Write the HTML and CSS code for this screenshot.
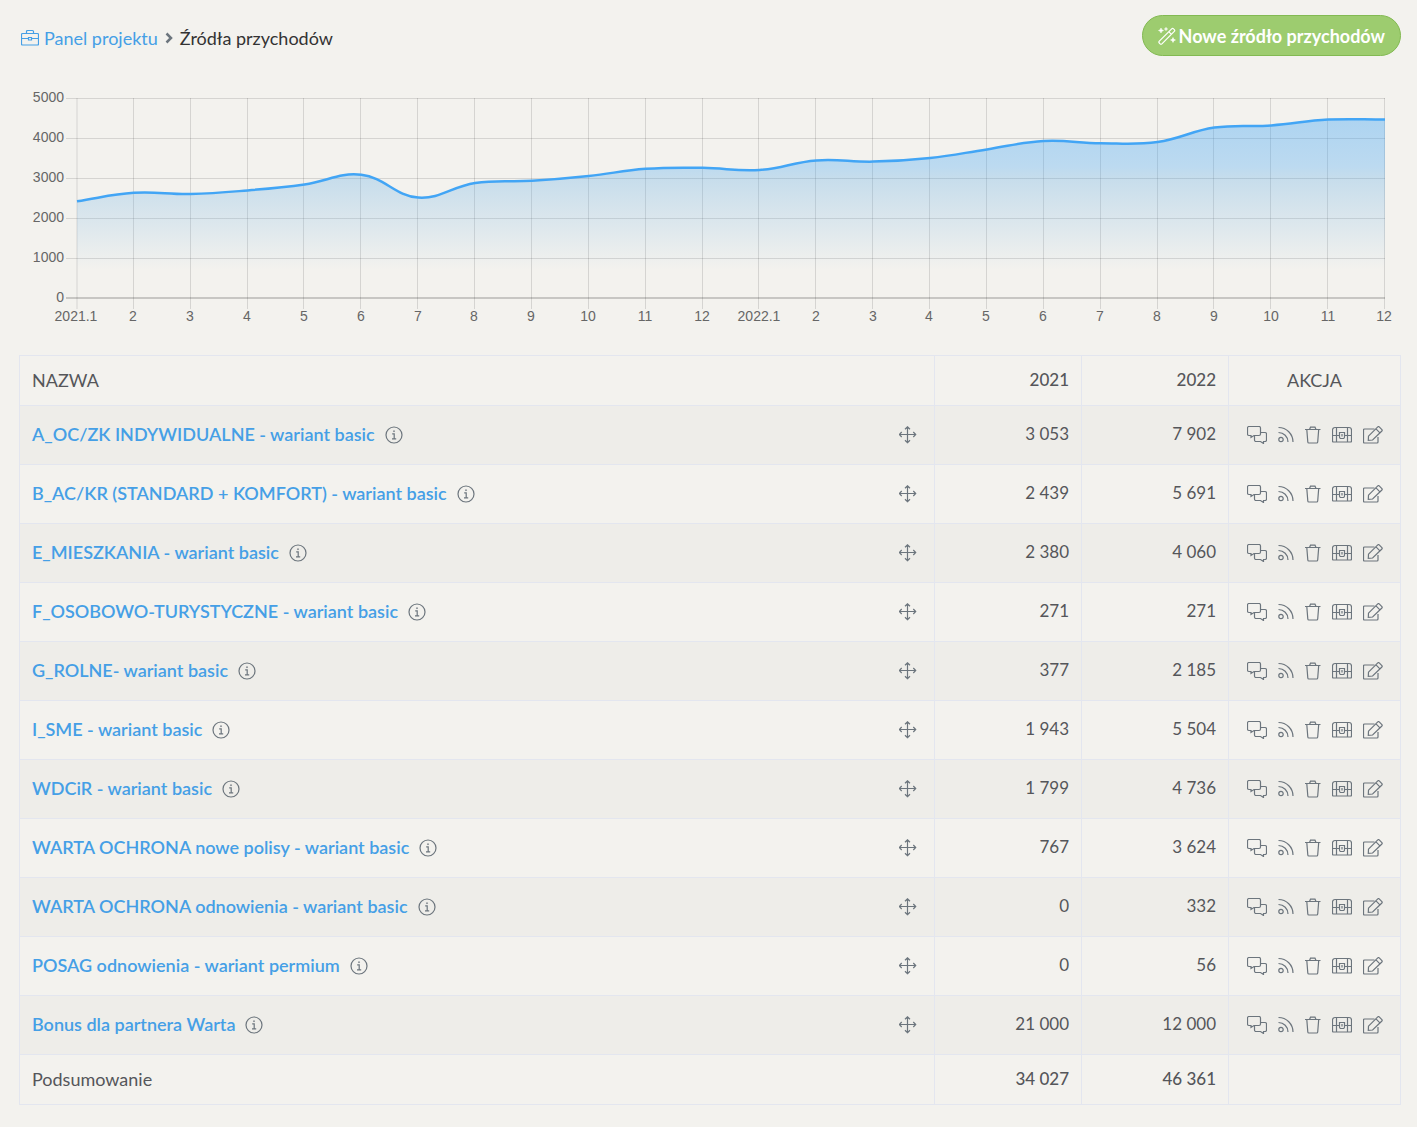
FILE: index.html
```html
<!DOCTYPE html>
<html lang="pl">
<head>
  <meta charset="utf-8">
  <meta name="viewport" content="width=device-width, initial-scale=1">
  <title>Źródła przychodów</title>
  <link rel="stylesheet" href="styles.css">
</head>
<body>
  <svg class="sprite" aria-hidden="true">
    <symbol id="i-comments" viewBox="0 0 20 18">
      <path d="M2 .5h10a1.5 1.5 0 0 1 1.500 1.500v6a1.500 1.500 0 0 1-1.500 1.500H7L4 11.500v-2H2A1.500 1.500 0 0 1 .5 8V2A1.500 1.500 0 0 1 2 .5z"/>
      <path d="M13.500 6.500H18A1.500 1.500 0 0 1 19.500 8v6a1.500 1.500 0 0 1-1.500 1.500h-1.500v2l-3-2H9A1.500 1.500 0 0 1 7.500 14V9.500"/>
    </symbol>
    <symbol id="i-rss" viewBox="0 0 16 18">
      <circle cx="3" cy="13.500" r="2.200"/>
      <path d="M.5 6.500a9.500 9.500 0 0 1 9.500 9.500M.5 1.500A14.500 14.500 0 0 1 15 16"/>
    </symbol>
    <symbol id="i-trash" viewBox="0 0 16 18">
      <path d="M0 3.500h15.500M4.500 3.500L5.500 1.200h4.500l1 2.300M1.800 3.500l1 12.500q.1 1 1 1h7.900q.9 0 1-1l1-12.500"/>
    </symbol>
    <symbol id="i-chest" viewBox="0 0 20 18">
      <path d="M3 1.500h14a2.500 2.500 0 0 1 2.500 2.500v11q0 1-1 1h-17q-1 0-1-1V4A2.500 2.500 0 0 1 3 1.500zM4.500 2v14M15.500 2v14M.5 9.500H7M13 9.500h6.500M7.500 6.500h5V11a1.500 1.500 0 0 1-1.500 1.500H9A1.500 1.500 0 0 1 7.500 11zM10 8v2.500"/>
    </symbol>
    <symbol id="i-edit" viewBox="0 0 20 18">
      <path d="M11.500 3H1.500q-1 0-1 1v12q0 1 1 1h12.500q1 0 1-1v-5"/>
      <path d="M5.500 10.200L14.800.9q.7-.7 1.400 0L18.900 3.600q.7.7 0 1.400L9.600 14l-4.300.4zM13 2.900l3.900 3.900"/>
    </symbol>
    <symbol id="i-move" viewBox="0 0 18 18">
      <path d="M8.500 .8v16.400M.3 8.500h16.400M6 3.200L8.500 .8l2.500 2.400M6 14.300L8.500 16.700l2.500-2.400M2.700 6L.3 8.500l2.400 2.500M14.300 6L16.700 8.500l-2.400 2.500"/>
    </symbol>
    <symbol id="i-info" viewBox="0 0 18 18">
      <circle cx="9" cy="9" r="8"/>
      <path d="M7.200 7.800h2v5M7 12.800h4.200"/>
      <circle class="dot" cx="9" cy="5.200" r=".6"/>
    </symbol>
    <symbol id="i-case" viewBox="0 0 18 18">
      <path d="M1.500 4.500h15q1 0 1 1v9.500q0 1-1 1h-15q-1 0-1-1V5.500q0-1 1-1zM5.500 4.500v-2q0-1 1-1h5q1 0 1 1v2M.5 9.500h7M10.500 9.500h7M7.500 8.500h3V11h-3z"/>
    </symbol>
    <symbol id="i-wand" viewBox="0 0 18 18">
      <path d="M1.300 14.200L13.700 1.800q.9-.9 1.800 0l.8.8q.9.9 0 1.800L3.900 16.800q-.9.900-1.800 0l-.8-.8q-.9-.9 0-1.800zM10.800 4.700l2.600 2.600"/>
      <path class="solid" d="M3 1l.8 1.700 1.700.8-1.700.8L3 6l-.8-1.700-1.700-.8 1.700-.8zM15 10.500l.8 1.700 1.700.8-1.700.8-.8 1.700-.8-1.700-1.700-.8 1.700-.8zM8 .3l.5 1.200 1.200.5-1.200.5L8 3.700l-.5-1.200L6.300 2l1.200-.5z"/>
    </symbol>
  </svg>

  <main class="page">
    <header class="topbar">
      <nav class="breadcrumb" aria-label="Nawigacja">
        <a class="crumb-link" href="#"><svg class="icon"><use href="#i-case"/></svg>Panel projektu</a>
        <svg class="chevron" viewBox="0 0 8 12"><path d="M1.500 1.500L6 6l-4.500 4.500"/></svg>
        <span>Źródła przychodów</span>
      </nav>
      <button class="new-button" type="button"><svg class="icon"><use href="#i-wand"/></svg>Nowe źródło przychodów</button>
    </header>

    <svg class="chart" id="chart" role="img" aria-label="Przychody"></svg>

    <table class="sources">
      <thead>
        <tr><th class="name">NAZWA</th><th class="num">2021</th><th class="num">2022</th><th class="actions">AKCJA</th></tr>
      </thead>
      <tbody id="rows"></tbody>
      <tfoot>
        <tr><td>Podsumowanie</td><td class="num">34 027</td><td class="num">46 361</td><td></td></tr>
      </tfoot>
    </table>
  </main>
  <script src="script.js"></script>
</body>
</html>
```
FILE: styles.css
```css
* {
  box-sizing: border-box;
}

body {
  margin: 0;
  background: #f3f2ee;
  color: #55565a;
  font: 18px/24px Lato, "Open Sans", sans-serif;
}

.sprite {
  display: none;
}

.page {
  padding: 15px 16px 22px 19px;
}

svg {
  fill: none;
  stroke: currentColor;
}

.icon {
  display: block;
  flex: none;
  width: 18px;
  height: 18px;
  stroke-width: 1.2;
}

.icon.wide {
  width: 20px;
}

.icon.narrow {
  width: 16px;
}

.dot,
.solid {
  fill: currentColor;
  stroke-width: 0.5;
}

.topbar {
  display: flex;
  justify-content: space-between;
  align-items: flex-start;
  margin-bottom: 24px;
}

.breadcrumb {
  display: flex;
  align-items: center;
  gap: 7px;
  padding: 11px 0 0 2px;
  color: #333;
}

.crumb-link {
  display: flex;
  align-items: center;
  gap: 5px;
  color: #459fe6;
  text-decoration: none;
}

.chevron {
  width: 8px;
  height: 12px;
  color: #6c757d;
  stroke-width: 2.5;
}

.new-button {
  display: flex;
  align-items: center;
  gap: 3px;
  height: 41px;
  padding: 0 15px;
  border: 1px solid #82b952;
  border-radius: 21px;
  background: #9dcc6f;
  color: #fff;
  font: inherit;
  font-weight: 700;
}

.chart {
  display: block;
  width: 100%;
  height: 255px;
  margin-bottom: 20px;
}

.chart text {
  fill: #666;
  stroke: none;
  font: 14px "Liberation Sans", Arial, sans-serif;
}

.grid {
  stroke: rgba(0, 0, 0, 0.12);
}

.grid.zero {
  stroke: rgba(0, 0, 0, 0.18);
  stroke-width: 2;
}

.area {
  fill: url(#fade);
  stroke: none;
}

.line {
  stroke: #42a5f5;
  stroke-width: 2.5;
}

.sources {
  width: 100%;
  border-collapse: collapse;
}

.sources th,
.sources td {
  height: 50px;
  padding: 0 12px;
  border: 1px solid #e3e6ef;
  font-weight: 400;
  text-align: left;
}

.sources tbody td {
  height: 59px;
}

.sources tbody tr:nth-child(odd) {
  background: #eeede9;
}

.sources th,
.sources tfoot td,
.sources .num {
  padding-bottom: 2px;
}

.sources .num {
  width: 147px;
  font-size: 17px;
  text-align: right;
}

.sources thead .num,
.sources tfoot .num {
  font-weight: 500;
}

.sources .actions {
  width: 172px;
  text-align: center;
}

.source {
  display: flex;
  align-items: center;
  gap: 10px;
}

.source a {
  padding-bottom: 2px;
  color: #459fe6;
  font-weight: 600;
  text-decoration: none;
}

.tool {
  padding: 0;
  border: 0;
  background: none;
  color: #6c757d;
}

.tool.move {
  margin: 0 5px 0 auto;
}

.tools {
  display: flex;
  justify-content: center;
  gap: 11px;
}
```
FILE: script.js
```js
const sources = [
  ["A_OC/ZK INDYWIDUALNE - wariant basic", "3 053", "7 902"],
  ["B_AC/KR (STANDARD + KOMFORT) - wariant basic", "2 439", "5 691"],
  ["E_MIESZKANIA - wariant basic", "2 380", "4 060"],
  ["F_OSOBOWO-TURYSTYCZNE - wariant basic", "271", "271"],
  ["G_ROLNE- wariant basic", "377", "2 185"],
  ["I_SME - wariant basic", "1 943", "5 504"],
  ["WDCiR - wariant basic", "1 799", "4 736"],
  ["WARTA OCHRONA nowe polisy - wariant basic", "767", "3 624"],
  ["WARTA OCHRONA odnowienia - wariant basic", "0", "332"],
  ["POSAG odnowienia - wariant permium", "0", "56"],
  ["Bonus dla partnera Warta", "21 000", "12 000"]
];

const tool = (icon, label, size = "", extra = "") =>
  `<button class="tool ${extra}" type="button" aria-label="${label}"><svg class="icon ${size}"><use href="#i-${icon}"/></svg></button>`;

document.getElementById("rows").innerHTML = sources.map(([name, first, second]) => `
  <tr>
    <td><div class="source"><a href="#">${name}</a>${tool("info", "Informacje")}${tool("move", "Przenieś", "", "move")}</div></td>
    <td class="num">${first}</td>
    <td class="num">${second}</td>
    <td><div class="tools">${tool("comments", "Komentarze", "wide")}${tool("rss", "Kanał", "narrow")}${tool("trash", "Usuń", "narrow")}${tool("chest", "Skarbiec", "wide")}${tool("edit", "Edytuj", "wide")}</div></td>
  </tr>`).join("");

const labels = ["2021.1", 2, 3, 4, 5, 6, 7, 8, 9, 10, 11, 12, "2022.1", 2, 3, 4, 5, 6, 7, 8, 9, 10, 11, 12];
const values = [2420, 2630, 2600, 2690, 2840, 3080, 2510, 2875, 2930, 3050, 3230, 3255, 3200, 3440, 3410, 3500, 3715, 3925, 3870, 3900, 4260, 4315, 4460, 4460];
const chart = document.getElementById("chart");

function drawChart() {
  const left = 58, right = chart.clientWidth - 16, top = 18, bottom = 218;
  const x = i => left + (right - left) * i / (values.length - 1);
  const y = v => bottom - (bottom - top) * v / 5000;
  const crisp = n => Math.floor(n) + 0.5;
  const points = values.map((v, i) => [x(i), y(v)]);

  // Smooth curve: control points follow the direction between each point's neighbours.
  const tension = 0.4;
  const handles = points.map((p, i) => {
    const a = points[i - 1] || p, b = points[i + 1] || p;
    const before = Math.hypot(p[0] - a[0], p[1] - a[1]);
    const after = Math.hypot(b[0] - p[0], b[1] - p[1]);
    const k = tension / (before + after);
    const dx = b[0] - a[0], dy = b[1] - a[1];
    return {
      from: [p[0] - k * before * dx, p[1] - k * before * dy],
      to: [p[0] + k * after * dx, p[1] + k * after * dy]
    };
  });
  const curve = "M" + points[0] + points.slice(1).map((p, i) => `C${handles[i].to} ${handles[i + 1].from} ${p}`).join("");

  let svg = `<defs><linearGradient id="fade" gradientUnits="userSpaceOnUse" x1="0" x2="0" y1="18" y2="190">
    <stop offset="0" stop-color="#42a5f5" stop-opacity=".43"/>
    <stop offset=".4" stop-color="#42a5f5" stop-opacity=".31"/>
    <stop offset=".47" stop-color="#59a9e6" stop-opacity=".29"/>
    <stop offset=".72" stop-color="#7db9e8" stop-opacity=".2"/>
    <stop offset="1" stop-color="#7db9e8" stop-opacity="0"/></linearGradient></defs>`;

  for (let v = 0; v <= 5000; v += 1000) {
    const gy = v ? crisp(y(v)) : y(v);
    svg += `<line class="grid ${v ? "" : "zero"}" x1="${left - 11}" x2="${right}" y1="${gy}" y2="${gy}"/>
      <text x="${left - 13}" y="${Math.round(y(v)) + 4}" text-anchor="end">${v}</text>`;
  }
  labels.forEach((label, i) => {
    const gx = i ? Math.round(x(i)) - 0.5 : x(i);
    svg += `<line class="grid ${i ? "" : "axis"}" x1="${gx}" x2="${gx}" y1="${top}" y2="${bottom + 11}"/>
      <text x="${Math.round(x(i) - 0.6)}" y="241" text-anchor="middle">${label}</text>`;
  });
  svg += `<path class="area" d="${curve}L${right} ${bottom}L${left} ${bottom}Z"/><path class="line" d="${curve}"/>`;
  chart.innerHTML = svg;
}

drawChart();
window.addEventListener("resize", drawChart);
```
